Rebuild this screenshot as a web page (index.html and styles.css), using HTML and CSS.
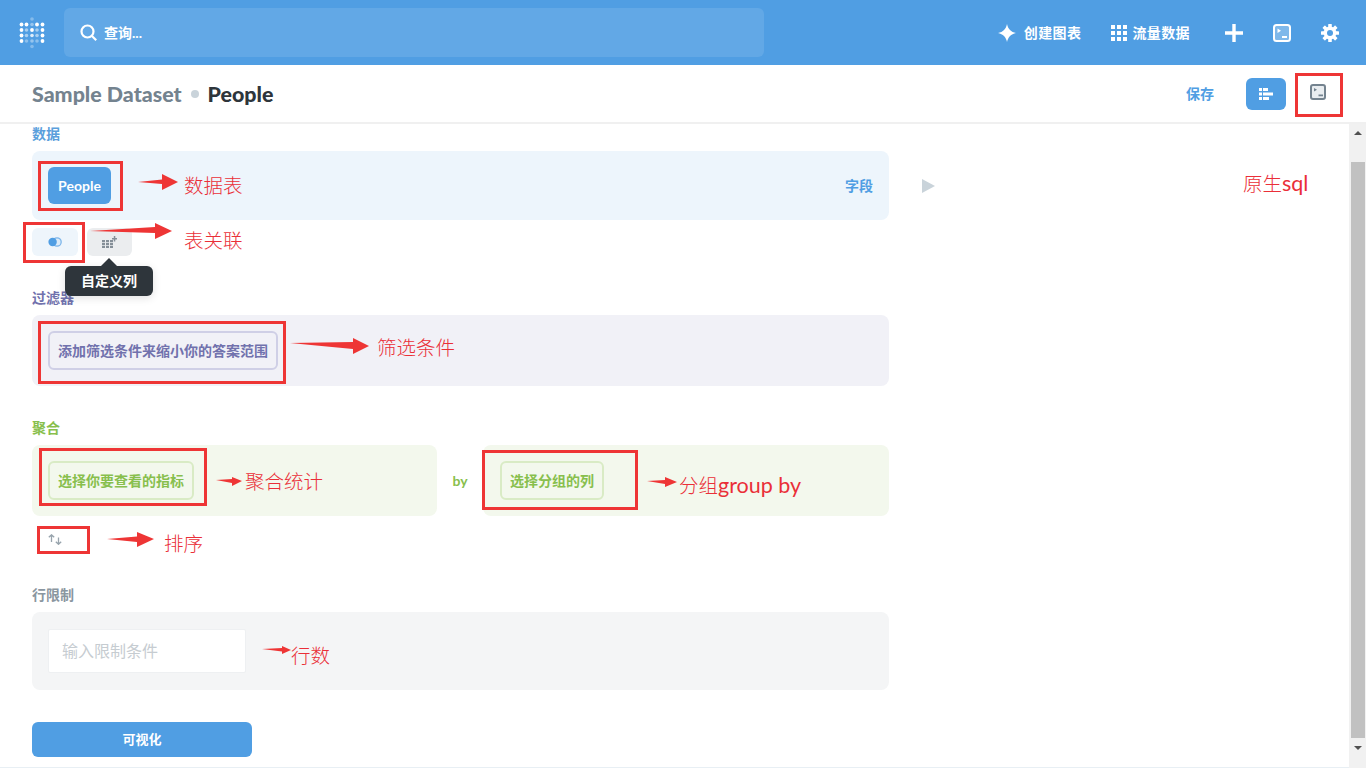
FILE: index.html
```html
<!DOCTYPE html>
<html lang="zh">
<head>
<meta charset="utf-8">
<title>Sample Dataset People</title>
<link rel="stylesheet" href="styles.css">
</head>
<body>
<div class="app">
  <nav class="nav">
    <svg class="logo" width="26" height="32" viewBox="0 0 26 32">
      <g fill="#fff">
        <circle cx="13" cy="2" r="1.8" opacity=".3"/>
        <circle cx="2.5" cy="7.5" r="1.9"/><circle cx="7.5" cy="7.5" r="1.9"/><circle cx="13" cy="7.5" r="1.8" opacity=".4"/><circle cx="18" cy="7.5" r="1.9"/><circle cx="23.5" cy="7.5" r="1.9"/>
        <circle cx="2.5" cy="13" r="1.9"/><circle cx="7.5" cy="13" r="1.8" opacity=".5"/><circle cx="13" cy="13" r="1.9"/><circle cx="18" cy="13" r="1.8" opacity=".5"/><circle cx="23.5" cy="13" r="1.9"/>
        <circle cx="2.5" cy="18.5" r="1.9"/><circle cx="7.5" cy="18.5" r="1.8" opacity=".5"/><circle cx="13" cy="18.5" r="1.8" opacity=".8"/><circle cx="18" cy="18.5" r="1.8" opacity=".5"/><circle cx="23.5" cy="18.5" r="1.9"/>
        <circle cx="2.5" cy="24" r="1.9"/><circle cx="7.5" cy="24" r="1.8" opacity=".35"/><circle cx="13" cy="24" r="1.8" opacity=".4"/><circle cx="18" cy="24" r="1.8" opacity=".35"/><circle cx="23.5" cy="24" r="1.9"/>
        <circle cx="13" cy="29.5" r="1.8" opacity=".3"/>
      </g>
    </svg>
    <div class="search">
      <svg class="search-icon" width="17" height="17" viewBox="0 0 17 17" fill="none" stroke="#fff" stroke-width="2.2"><circle cx="7.5" cy="7.5" r="6"/><path d="M12 12l4.2 4.2"/></svg>
      <span>查询...</span>
    </div>
    <div class="nav-actions">
      <a class="nav-link">
        <svg width="18" height="18" viewBox="0 0 18 18" fill="#fff"><path d="M9 0C10 5 13 8 18 9C13 10 10 13 9 18C8 13 5 10 0 9C5 8 8 5 9 0Z"/></svg>
        <span>创建图表</span>
      </a>
      <a class="nav-link nav-link-tight">
        <svg width="16" height="16" viewBox="0 0 16 16" fill="#fff"><path d="M0 0h4v4H0zM6 0h4v4H6zM12 0h4v4h-4zM0 6h4v4H0zM6 6h4v4H6zM12 6h4v4h-4zM0 12h4v4H0zM6 12h4v4H6zM12 12h4v4h-4z"/></svg>
        <span>流量数据</span>
      </a>
      <svg class="plus" width="18" height="18" viewBox="0 0 18 18" fill="#fff"><path d="M7.3 0h3.4v7.3H18v3.4h-7.3V18H7.3v-7.3H0V7.3h7.3z"/></svg>
      <svg width="18" height="18" viewBox="0 0 18 18"><rect x="1" y="1" width="16" height="16" rx="2.5" fill="#7fb8ea" stroke="#fff" stroke-width="2"/><path d="M4.5 4.5L8 6.7 4.5 9zM9 12h5v2H9z" fill="#fff"/></svg>
      <svg width="18" height="18" viewBox="0 0 18 18"><g fill="#fff"><rect x="7.2" y="0" width="3.6" height="18" rx=".6"/><rect x="7.2" y="0" width="3.6" height="18" rx=".6" transform="rotate(45 9 9)"/><rect x="7.2" y="0" width="3.6" height="18" rx=".6" transform="rotate(90 9 9)"/><rect x="7.2" y="0" width="3.6" height="18" rx=".6" transform="rotate(135 9 9)"/></g><circle cx="9" cy="9" r="4.8" fill="none" stroke="#fff" stroke-width="3.2"/><circle cx="9" cy="9" r="3" fill="#509ee3"/></svg>
    </div>
  </nav>

  <header class="header">
    <div class="crumbs">
      <span class="crumb-db">Sample Dataset</span>
      <i class="crumb-dot"></i>
      <span class="crumb-table">People</span>
    </div>
    <div class="header-actions">
      <a class="save">保存</a>
      <button class="editor-toggle">
        <svg width="14" height="12" viewBox="0 0 14 12" fill="#fff"><path d="M0 0h3v3H0zM4 0h5v3H4zM0 4.5h3v3H0zM4 4.5h10v3H4zM0 9h3v3H0zM4 9h6v3H4z"/></svg>
      </button>
      <svg class="sql-icon" width="16" height="16" viewBox="0 0 16 16"><rect x="1" y="1" width="14" height="14" rx="2" fill="#e9edf0" stroke="#74838f" stroke-width="2"/><path d="M4 4l3 1.8L4 7.6zM8.5 10.5h4.5v1.8H8.5z" fill="#74838f"/></svg>
    </div>
  </header>

  <main class="main">
    <div class="content">
      <section class="block">
        <h3 class="label label-data">数据</h3>
        <div class="data-row">
          <div class="box box-data">
            <button class="table-pill">People</button>
            <a class="fields">字段</a>
          </div>
          <svg class="run" width="13" height="14" viewBox="0 0 13 14" fill="#c9d3da"><path d="M0 0l13 7-13 7z"/></svg>
        </div>
        <div class="steps">
          <button class="step step-join">
            <svg width="14" height="10" viewBox="0 0 14 10"><circle cx="9" cy="5" r="4.2" fill="#dcebf8" stroke="#7db6ea" stroke-width="1.3"/><circle cx="4.6" cy="5" r="4.2" fill="#509ee3"/></svg>
          </button>
          <button class="step step-custom">
            <svg width="15" height="12" viewBox="0 0 15 12" fill="#858f98"><path d="M0 4h3v2.2H0zM4 4h3v2.2H4zM8 4h3v2.2H8zM0 7h3v2.2H0zM4 7h3v2.2H4zM8 7h3v2.2H8zM0 10h3v2H0zM4 10h3v2H4zM8 10h3v2H8zM11.8 0h1.5v2h1.7v1.5h-1.7v2h-1.5v-2h-1.8V2h1.8z"/></svg>
            <span class="tooltip">自定义列</span>
          </button>
        </div>
      </section>

      <section class="block block-filter">
        <h3 class="label label-filter">过滤器</h3>
        <div class="box box-filter">
          <button class="pick pick-filter">添加筛选条件来缩小你的答案范围</button>
        </div>
      </section>

      <section class="block block-agg">
        <h3 class="label label-agg">聚合</h3>
        <div class="agg-row">
          <div class="box box-agg box-agg-left">
            <button class="pick pick-agg">选择你要查看的指标</button>
          </div>
          <span class="by">by</span>
          <div class="box box-agg box-agg-right">
            <button class="pick pick-agg">选择分组的列</button>
          </div>
        </div>
        <div class="sort-row">
          <svg width="14" height="11" viewBox="0 0 14 11" fill="none" stroke="#98a4ad" stroke-width="1.3"><path d="M3.5 8V.8M.8 3.3L3.5.8l2.7 2.5M10.5 3.5v6.7M7.8 7.8l2.7 2.5 2.7-2.5"/></svg>
        </div>
      </section>

      <section class="block block-limit">
        <h3 class="label label-limit">行限制</h3>
        <div class="box box-limit">
          <input class="limit-input" type="text" placeholder="输入限制条件">
        </div>
      </section>

      <button class="visualize">可视化</button>
    </div>
    <div class="scrollbar">
      <i class="scroll-up"></i>
      <i class="scroll-thumb"></i>
      <i class="scroll-down"></i>
    </div>
  </main>
</div>

<svg class="marks" width="1366" height="768" viewBox="0 0 1366 768">
  <g fill="none" stroke="#ee3535" stroke-width="3">
    <rect x="1296.5" y="74.5" width="45" height="41"/>
    <rect x="39.5" y="162.5" width="82" height="47"/>
    <rect x="24.5" y="223.5" width="59" height="38"/>
    <rect x="39.5" y="322.5" width="245" height="60"/>
    <rect x="40.5" y="449.5" width="165" height="55"/>
    <rect x="483.5" y="451.5" width="153" height="57"/>
    <rect x="38.5" y="527.5" width="50" height="25"/>
  </g>
  <g fill="#ee3535">
    <polygon points="138,182 162,179.5 162,174 178,182 162,190 162,184"/>
    <polygon points="90,231 155,227 155,223 172,231 155,239 155,233"/>
    <polygon points="290,343 353,342 353,338 369,346 353,354 353,349"/>
    <polygon points="216,480 232,479 232,477 242,481 232,486 232,483"/>
    <polygon points="647,481 665,480 665,477 677,482 665,487 665,484"/>
    <polygon points="107,539 137,536.5 137,532 154,539 137,547 137,542"/>
    <polygon points="262,649 282,648 282,646 291,650 282,654 282,651.5"/>
  </g>
</svg>
<div class="notes">
  <span class="note note-table">数据表</span>
  <span class="note note-join">表关联</span>
  <span class="note note-filter">筛选条件</span>
  <span class="note note-agg">聚合统计</span>
  <span class="note note-group">分组<span class="note-latin">group by</span></span>
  <span class="note note-sort">排序</span>
  <span class="note note-rows">行数</span>
  <span class="note note-sql">原生<span class="note-latin">sql</span></span>
</div>
</body>
</html>
```
FILE: styles.css
```css
* { box-sizing: border-box; }
html, body { margin: 0; height: 768px; overflow: hidden; background: #fff; }
body {
  position: relative;
  font-family: Lato, "Noto Sans CJK SC", sans-serif;
  font-size: 14px;
  color: #2e353b;
}
button { font-family: inherit; border: 0; padding: 0; margin: 0; }
svg { display: block; flex: none; }

.app { display: flex; flex-direction: column; height: 768px; }

.nav {
  flex: none;
  height: 65px;
  background: #509ee3;
  display: flex;
  align-items: center;
  padding: 0 27px 0 19px;
}
.logo { margin-right: 19px; }
.search {
  width: 700px;
  height: 49px;
  border-radius: 6px;
  background: #62a8e6;
  display: flex;
  align-items: center;
  padding-left: 16px;
  gap: 7px;
  color: #fff;
  font-weight: 700;
}
.search span { padding-bottom: 2px; }
.nav-actions { margin-left: auto; display: flex; align-items: center; gap: 30px; color: #fff; font-weight: 700; }
.nav-link { display: flex; align-items: center; gap: 8px; }
.nav-link span { padding-bottom: 2px; letter-spacing: .4px; }
.nav-link-tight { gap: 5px; }
.plus { margin-left: 5px; }

.header {
  flex: none;
  height: 59px;
  border-bottom: 2px solid #f0f0f0;
  display: flex;
  align-items: center;
  justify-content: space-between;
  padding: 0 40px 0 32px;
}
.crumbs { display: flex; align-items: center; font-size: 21.4px; font-weight: 900; padding-top: 1px; }
.crumb-db { color: #74838f; }
.crumb-dot { width: 8px; height: 8px; border-radius: 50%; background: #c9d3da; margin: 0 9px 0 9px; }
.crumb-table { color: #2e353b; }
.header-actions { display: flex; align-items: center; }
.save { color: #509ee3; font-weight: 700; margin-right: 32px; padding-bottom: 2px; }
.editor-toggle {
  width: 40px;
  height: 32px;
  border-radius: 6px;
  background: #509ee3;
  display: flex;
  align-items: center;
  justify-content: center;
  margin-right: 24px;
}
.sql-icon { margin-top: -4px; }

.main { flex: 1; display: flex; min-height: 0; }
.content {
  flex: 1;
  padding: 2px 0 0 32px;
  border-bottom: 1px solid #e8eff4;
  overflow: hidden;
}
.block { width: 857px; }
.block-filter, .block-agg { margin-top: 34px; }
.block-limit { margin-top: 36px; }

.label { margin: 0 0 9px; height: 16px; line-height: 16px; font-size: 14px; font-weight: 700; }
.label-data { color: #5b9fdc; }
.label-filter { color: #7172ad; }
.label-agg { color: #88bf4d; }
.label-limit { color: #8a96a0; }

.box { border-radius: 8px; display: flex; align-items: center; padding: 0 16px; }
.data-row { display: flex; align-items: center; }
.box-data { width: 857px; height: 69px; flex: none; background: #edf5fc; justify-content: space-between; }
.run { margin-left: 33px; }
.table-pill {
  width: 63px;
  height: 37px;
  border-radius: 6px;
  background: #509ee3;
  color: #fff;
  font-size: 14px;
  font-weight: 700;
}
.fields { color: #509ee3; font-weight: 700; padding-bottom: 2px; }

.steps { display: flex; gap: 9px; margin-top: 8px; }
.step { height: 28px; border-radius: 6px; display: flex; align-items: center; justify-content: center; position: relative; }
.step-join { width: 46px; background: #eef5fb; }
.step-custom { width: 45px; background: #ebedef; }
.tooltip {
  position: absolute;
  top: 38px;
  left: -22px;
  width: 88px;
  height: 30px;
  line-height: 30px;
  border-radius: 6px;
  background: #2e353b;
  color: #fff;
  font-size: 14px;
  font-weight: 700;
  text-align: center;
  box-shadow: 0 2px 8px rgba(0, 0, 0, .12);
}
.tooltip::before {
  content: "";
  position: absolute;
  top: -8px;
  left: 36px;
  border: 8px solid transparent;
  border-top-width: 0;
  border-bottom-color: #2e353b;
}

.box-filter { height: 71px; background: #f1f1f7; }
.pick {
  height: 39px;
  border-radius: 6px;
  background: transparent;
  font-size: 14px;
  font-weight: 700;
  padding: 0 8px 2px;
}
.pick-filter { width: 230px; color: #7172ad; border: 2px solid #cfcfe6; }
.pick-agg { color: #88bf4d; border: 2px solid #d9ebc5; }

.agg-row { display: flex; align-items: center; }
.box-agg { height: 71px; background: #f3f8ed; }
.box-agg-left { width: 405px; flex: none; }
.box-agg-left .pick-agg { width: 146px; }
.box-agg-right { flex: 1; padding-left: 17px; }
.box-agg-right .pick-agg { width: 104px; }
.by { width: 46px; flex: none; text-align: center; color: #88bf4d; font-weight: 700; }

.sort-row { height: 24px; margin-top: 11px; padding-left: 16px; display: flex; align-items: center; }

.box-limit { height: 78px; background: #f4f5f6; }
.limit-input {
  width: 198px;
  height: 44px;
  border: 1px solid #eef0f2;
  border-radius: 2px;
  background: #fff;
  padding: 0 13px 2px;
  font-family: inherit;
  font-size: 16px;
  outline: none;
}
.limit-input::placeholder { color: #c6ccd1; opacity: 1; }

.visualize {
  display: block;
  margin-top: 32px;
  width: 220px;
  height: 35px;
  padding-bottom: 2px;
  border-radius: 6px;
  background: #509ee3;
  color: #fff;
  font-size: 13px;
  font-weight: 700;
}

.scrollbar { flex: none; width: 17px; background: #f1f1f1; display: flex; flex-direction: column; align-items: center; }
.scrollbar i { display: block; }
.scroll-up, .scroll-down { width: 0; height: 0; border: 4px solid transparent; }
.scroll-up { border-top-width: 0; border-bottom-color: #505050; margin: 7px 0 27px; }
.scroll-thumb { width: 14px; height: 576px; background: #c1c1c1; }
.scroll-down { border-bottom-width: 0; border-top-color: #505050; margin-top: 8px; }

.marks { position: absolute; left: 0; top: 0; pointer-events: none; }
.notes { position: absolute; left: 0; top: 0; pointer-events: none; }
.note {
  position: absolute;
  white-space: nowrap;
  font-family: Lato, "Noto Sans CJK SC", sans-serif;
  font-size: 19.5px;
  font-weight: 300;
  line-height: 24px;
  color: #ea2f38;
}
.note-latin { font-size: 21.5px; font-weight: 400; }
.note-table { left: 184px; top: 174px; }
.note-join { left: 184px; top: 229px; }
.note-filter { left: 377px; top: 336px; }
.note-agg { left: 245px; top: 470px; }
.note-group { left: 679px; top: 473px; }
.note-sort { left: 164px; top: 532px; }
.note-rows { left: 291px; top: 644px; }
.note-sql { left: 1243px; top: 171px; }
```
